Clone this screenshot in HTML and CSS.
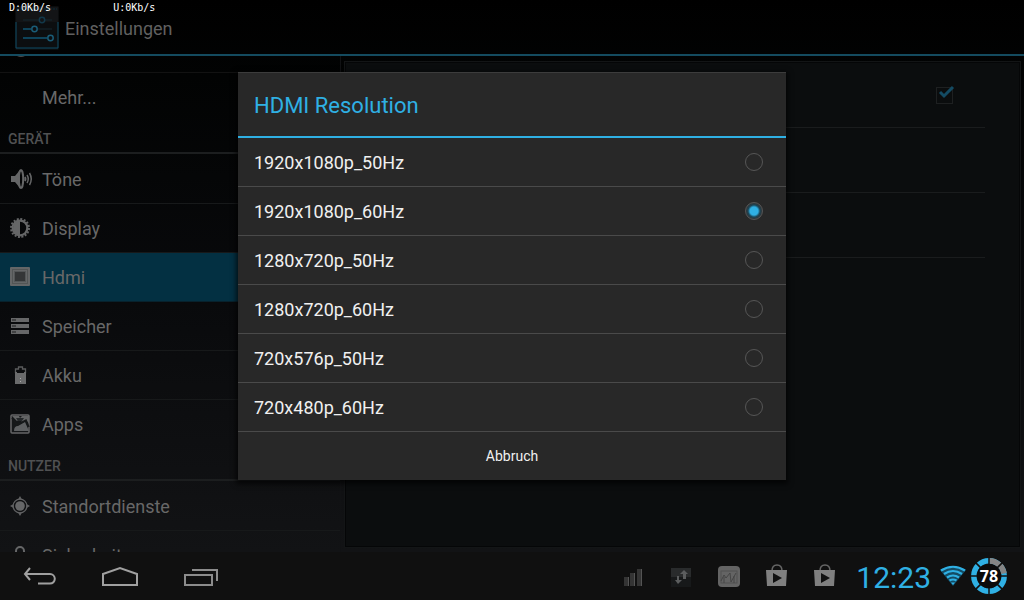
FILE: index.html
```html
<!DOCTYPE html>
<html lang="de">
<head>
<meta charset="utf-8">
<title>Einstellungen</title>
<link rel="stylesheet" href="styles.css">
</head>
<body>
<div class="screen">
  <div class="app">
    <header class="titlebar">
      <svg class="app-icon" width="44" height="44" viewBox="0 0 44 44" fill="none">
        <rect x="1" y="1" width="42" height="42" fill="#0c0e10" stroke="#15191b"/>
        <rect x="1" y="1" width="42" height="15" fill="#131416"/>
        <path d="M2 3h40" stroke="#0b2c3b" stroke-dasharray="2 1"/>
        <path d="M1 16v26h42V16" stroke="#0c4a64"/>
        <path d="M8 14h16M30 14h7M23 23h14" stroke="#15272f"/>
        <path d="M8 23h8M8 32h24" stroke="#0f5573" stroke-width="1.5"/>
        <circle cx="27" cy="14" r="2.7" stroke="#12384a" stroke-width="1.5"/>
        <circle cx="19.5" cy="23" r="2.7" stroke="#1a5c77" stroke-width="1.5"/>
        <circle cx="35.5" cy="32" r="2.7" stroke="#1a5c77" stroke-width="1.5"/>
      </svg>
      <h1 class="app-title">Einstellungen</h1>
    </header>

    <div class="content">
      <nav class="sidebar" aria-label="Einstellungen">
        <div class="row row-cut">
          <svg class="row-icon" width="20" height="16" viewBox="0 0 20 16"><path d="M5 0h8q-4 2-8 0z" fill="#4a4b4c"/></svg>
        </div>
        <a class="row row-last" href="#mehr"><span class="row-icon"></span>Mehr...</a>

        <h2 class="section">GERÄT</h2>
        <a class="row" href="#toene">
          <svg class="row-icon" width="22" height="22" viewBox="0 0 22 22" fill="none" stroke="#656667">
            <path d="M0 8h4l5-6v18l-5-6H0z" fill="#656667" stroke="none"/>
            <ellipse cx="10" cy="11" rx="2.2" ry="9" stroke-width="2"/>
            <path d="M14 9q1 2 0 4" stroke-width="2"/>
            <path d="M16 7q2.500 4 0 8M18.500 5q3.500 6 0 12" stroke-width="1.500"/>
          </svg>Töne</a>
        <a class="row" href="#display">
          <svg class="row-icon" width="22" height="22" viewBox="0 0 22 22">
            <circle cx="9" cy="11" r="9" fill="none" stroke="#656667" stroke-width="2" stroke-dasharray="2 1.534"/>
            <circle cx="9" cy="11" r="7.300" fill="none" stroke="#656667" stroke-width="2.200"/>
            <path d="M9 4a7 7 0 0 0 0 14z" fill="#656667"/>
          </svg>Display</a>
        <a class="row row-active" href="#hdmi" aria-current="page">
          <svg class="row-icon" width="22" height="22" viewBox="0 0 22 22">
            <rect x="-1" y="1" width="20" height="19" rx="1" fill="#646667"/>
            <rect x="1.500" y="3.500" width="15" height="14" fill="none" stroke="#414445" stroke-dasharray="1 1"/>
            <rect x="3" y="5" width="12" height="11" fill="#535657"/>
            <rect x="4" y="6" width="10" height="9" fill="#343637"/>
          </svg>Hdmi</a>
        <a class="row" href="#speicher">
          <svg class="row-icon" width="22" height="22" viewBox="0 0 22 22">
            <path d="M0 3h18v4H0zM0 9h18v4H0zM0 15h18v4H0z" fill="#666768"/>
            <path d="M1 5h4M1 11h4M1 17h4" stroke="#1b1c1d"/>
          </svg>Speicher</a>
        <a class="row" href="#akku">
          <svg class="row-icon" width="22" height="22" viewBox="0 0 22 22">
            <path d="M4.500 9V5h3V3h4v2h3v4" fill="none" stroke="#5a5b5c" stroke-width="1.300"/>
            <path d="M4 8h2v1h7V8h2v12H4z" fill="#6a6b6c"/>
            <path d="M9.500 14v1M9.500 17v1" stroke="#aaa"/>
          </svg>Akku</a>
        <a class="row row-last" href="#apps">
          <svg class="row-icon" width="22" height="22" viewBox="0 0 22 22">
            <rect x="0" y="2" width="18" height="18" rx="1" fill="#151719" stroke="#656667" stroke-width="1.500"/>
            <path d="M1 3h7l1 2 2-2h7v7l-4-3-3 2-2-3-3 2z" fill="#626364"/>
            <path d="M3 18q0-5 4-5l7-4 4 9z" fill="#5e6062"/>
            <path d="M1 5l5 7 9-5 3 7" fill="none" stroke="#17191a" stroke-width="1.500"/>
            <path d="M5 5l2 3h4l2-3" fill="#25282a"/>
          </svg>Apps</a>

        <h2 class="section">NUTZER</h2>
        <a class="row" href="#standort">
          <svg class="row-icon" width="22" height="22" viewBox="0 0 22 22">
            <circle cx="9" cy="11" r="4.800" fill="#666768"/>
            <circle cx="9" cy="11" r="6.900" fill="none" stroke="#606162" stroke-width="1.300"/>
            <path d="M9 1l2 3.500H7zM9 21l2-3.500H7zM-1 11l3.500-2v4zM19 11l-3.500-2v4z" fill="#606162"/>
          </svg>Standortdienste</a>
        <a class="row" href="#sicherheit">
          <svg class="row-icon" width="22" height="22" viewBox="0 0 22 22">
            <path d="M5 10V7a4 4 0 0 1 8 0v3" fill="none" stroke="#666768" stroke-width="2"/>
            <rect x="3" y="10" width="12" height="10" fill="#666768"/>
          </svg>Sicherheit</a>
      </nav>

      <main class="panel">
        <label class="option"><input class="check" type="checkbox" checked aria-label="HDMI"><svg class="tick" width="18" height="18" viewBox="0 0 18 18" fill="none"><path d="M3 8l4 4 9-9" stroke="#144b63" stroke-width="3"/></svg></label>
        <div class="option"></div>
        <div class="option"></div>
      </main>
    </div>

    <div class="overlay">
      <form class="dialog" role="dialog" aria-labelledby="dialog-title">
        <h2 class="dialog-title" id="dialog-title">HDMI Resolution</h2>
        <label class="choice">1920x1080p_50Hz<input class="radio" type="radio" name="resolution"></label>
        <label class="choice">1920x1080p_60Hz<input class="radio" type="radio" name="resolution" checked></label>
        <label class="choice">1280x720p_50Hz<input class="radio" type="radio" name="resolution"></label>
        <label class="choice">1280x720p_60Hz<input class="radio" type="radio" name="resolution"></label>
        <label class="choice">720x576p_50Hz<input class="radio" type="radio" name="resolution"></label>
        <label class="choice">720x480p_60Hz<input class="radio" type="radio" name="resolution"></label>
        <button class="cancel" type="button">Abbruch</button>
      </form>
    </div>

    <div class="netspeed"><span class="speed">D:0Kb/s</span><span class="speed">U:0Kb/s</span></div>
  </div>

  <footer class="navbar">
    <button class="key" type="button" aria-label="Zurück">
      <svg width="36" height="24" viewBox="0 0 36 24" fill="none" stroke="#a0a0a0" stroke-width="2"><path d="M8 4l-5 6 5 6M3 10h25a4.800 4.800 0 0 1 0 9.600H16"/></svg>
    </button>
    <button class="key" type="button" aria-label="Startseite">
      <svg width="38" height="24" viewBox="0 0 38 24" fill="none" stroke="#a0a0a0" stroke-width="2"><path d="M2 10l17-6 17 6v11H2z"/></svg>
    </button>
    <button class="key" type="button" aria-label="Letzte Apps">
      <svg width="36" height="24" viewBox="0 0 36 24" fill="none" stroke="#8c8c8c" stroke-width="2"><path d="M3 11h27v10H3zM10 6h25v11"/></svg>
    </button>
    <div class="status">
      <span class="cell"><svg width="24" height="24" viewBox="0 0 24 24"><path d="M3 13h5v9H3zM9 9h5v13H9zM16 5h5v17h-5z" fill="#343434"/><path d="M7.500 13v9M13.500 9v13M20.500 5v17" stroke="#545454"/></svg></span>
      <span class="cell"><svg width="24" height="24" viewBox="0 0 24 24"><rect x="2" y="4" width="20" height="19" fill="#17191a"/><rect x="2" y="4" width="20" height="9" fill="#292b2c"/><path d="M15 6l-4 4h3v5h3v-5h2zM9 20l-3-4h2v-4h2v4h3z" fill="#5b5d5e"/></svg></span>
      <span class="cell"><svg width="24" height="24" viewBox="0 0 24 24" fill="none"><rect x="1" y="2" width="22" height="21" rx="4" fill="#646464"/><rect x="4" y="7" width="16" height="12" stroke="#515151"/><path d="M4 17l3-6 2 3 4-5 1 9 5-9M7 19v-6M17 19v-7" stroke="#454545"/></svg></span>
      <span class="cell"><svg width="24" height="24" viewBox="0 0 24 24"><path d="M7 7q0-6 5-6t5 6" fill="none" stroke="#666" stroke-width="1.500"/><path d="M1 6h21l-1 16H2z" fill="#808080"/><path d="M8 9l9 5-9 5z" fill="#111"/></svg></span>
      <span class="cell"><svg width="24" height="24" viewBox="0 0 24 24"><path d="M7 7q0-6 5-6t5 6" fill="none" stroke="#666" stroke-width="1.500"/><path d="M1 6h21l-1 16H2z" fill="#808080"/><path d="M8 9l9 5-9 5z" fill="#111"/></svg></span>
      <time class="clock">12:23</time>
      <svg class="wifi" width="28" height="24" viewBox="0 0 28 24" fill="none">
        <path d="M1 6q13-8 26 0L14 22z" fill="#144b63"/>
        <path d="M2 6.500q12-7.500 24 0M5 10q9-6 18 0M8 13.500q6-4 12 0M10.500 16.500q3.500-2 7 0" stroke="#2fb0e4" stroke-width="2.200"/>
        <path d="M12 18.500h4L14 21z" fill="#2fb0e4"/>
      </svg>
      <svg class="battery" width="38" height="38" viewBox="0 0 38 38" role="img" aria-label="78">
        <g fill="none" stroke-width="5.500">
          <circle cx="19" cy="19" r="15.200" stroke="#2fb0e4"/>
          <path d="M19 3.800A15.200 15.200 0 0 1 34 16.500" stroke="#858585"/>
        </g>
        <path d="M19 0v38M0 19h16M5.600 5.600l26.800 26.800M32.400 5.600L5.600 32.400M22 19h16" stroke="#101010" stroke-width="1.500"/>
        <circle cx="19" cy="19" r="12" fill="#0b0b0b"/>
        <text class="battery-text" x="19" y="25" text-anchor="middle">78</text>
      </svg>
    </div>
  </footer>
</div>
</body>
</html>
```
FILE: styles.css
```css
* { box-sizing: border-box; }
body {
  margin: 0;
  background: #000;
  color: #686868;
  font-family: Roboto, "Noto Sans", sans-serif;
}
h1, h2 { margin: 0; font-weight: 400; }
a { color: inherit; text-decoration: none; }
button { border: 0; margin: 0; padding: 0; background: none; font: inherit; }

.screen { height: 100vh; display: flex; flex-direction: column; overflow: hidden; }
.app {
  position: relative;
  flex: 1;
  min-height: 0;
  display: flex;
  flex-direction: column;
  background: linear-gradient(#000 0%, #020303 14%, #08090b 50%, #121315 100%);
}

.titlebar {
  flex: none;
  height: 56px;
  display: flex;
  align-items: center;
  gap: 6px;
  padding: 2px 15px 0;
  border-bottom: 2px solid #144b5f;
}
.app-title { font-size: 18px; line-height: 24px; color: #606060; padding-top: 1px; }
.app-icon { flex: none; }

.content { flex: 1; min-height: 0; display: grid; grid-template-columns: 1fr 2fr; }
.sidebar { overflow: hidden; border-right: 1px solid #111214; }
.row {
  height: 49px;
  display: flex;
  align-items: center;
  gap: 11px;
  padding: 0 11px;
  border-bottom: 1px solid #17191a;
  font-size: 18px;
}
.row-icon { flex: none; width: 20px; overflow: visible; }
svg.row-icon { width: 22px; margin-right: -2px; }
.row-cut { height: 17px; align-items: flex-start; border-color: #121212; }
.row-last { border-bottom-color: transparent; }
.row-active { background: #033042; border-bottom-color: #08222d; }
.section {
  height: 32px;
  margin-bottom: 1px;
  padding: 2px 8px 0;
  border-bottom: 2px solid #1c1e1f;
  font-size: 14px;
  line-height: 30px;
  font-weight: 500;
  color: #505152;
}

.panel {
  margin: 5px 3px 4px;
  padding: 0 34px 0 16px;
  border: 2px solid #050607;
  outline: 1px solid #131516;
  outline-offset: -1px;
  background: #0b0d0e;
}
.option {
  height: 65px;
  display: flex;
  align-items: center;
  justify-content: flex-end;
  padding-right: 32px;
  border-bottom: 1px solid #1a1c1d;
}
.check { appearance: none; width: 17px; height: 17px; margin: 0; border: 1px solid #1e2021; }
.tick { margin: 0 -2px 4px -16px; }

.overlay { position: absolute; inset: 0; display: flex; align-items: center; justify-content: center; }
.dialog {
  width: 548px;
  max-width: 90%;
  display: flex;
  flex-direction: column;
  background: #282828;
  color: #f0f0f0;
  box-shadow: inset 0 1px #3c3c3c, 0 2px 5px 2px #000a;
}
.dialog-title {
  height: 66px;
  padding: 2px 16px 0;
  border-bottom: 2px solid #2fb0e4;
  font-size: 22px;
  line-height: 64px;
  color: #2fb0e4;
}
.choice {
  height: 49px;
  display: flex;
  align-items: center;
  justify-content: space-between;
  padding: 0 23px 0 16px;
  border-bottom: 1px solid #4a4a4a;
  font-size: 18px;
}
.radio {
  appearance: none;
  width: 18px;
  height: 18px;
  margin: 0;
  border: 1px solid #565656;
  border-radius: 50%;
}
.radio:checked { background: radial-gradient(circle, #2fb0e4 0 4px, #1b4556 6px, #303538 8px); }
.cancel { height: 48px; color: #f0f0f0; font-size: 14px; }

.netspeed {
  position: absolute;
  top: 2px;
  left: 9px;
  display: flex;
  gap: 62px;
  font: 10px/12px "DejaVu Sans Mono", monospace;
  color: #fff;
}

.navbar { flex: none; height: 48px; display: flex; align-items: center; background: #101010; }
.key { width: 80px; height: 48px; display: grid; place-items: center; }
.status { margin-left: auto; display: flex; align-items: center; padding-right: 16px; }
.cell { width: 48px; display: grid; place-items: center; }
.clock { margin: 3px 8px 0 7px; font-size: 30px; line-height: 36px; color: #2fb0e4; }
.battery { margin-left: 3px; }
.battery-text { font: 700 16px "Noto Sans", sans-serif; fill: #fff; }
```
